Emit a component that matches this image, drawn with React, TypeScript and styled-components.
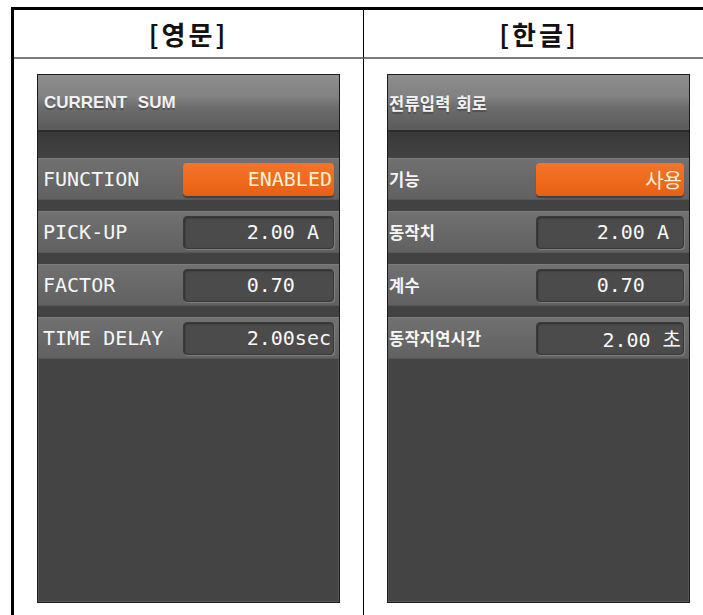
import React from "react";
import styled, { createGlobalStyle, css } from "styled-components";

const GlobalStyle = createGlobalStyle`
  html, body {
    margin: 0;
    padding: 0;
    background: #fff;
    overflow: hidden;
  }
`;

type Lang = "en" | "ko";

const MONO = `"DejaVu Sans Mono", "Noto Sans CJK KR", monospace`;
const HANGUL = `"Noto Sans CJK KR", "Noto Sans", sans-serif`;

/* ── Outer comparison table ───────────────────────── */
const Table = styled.div`
  margin: 7px 0 0 11px;
  border-top: 3px solid #000;
  border-left: 3px solid #000;
  display: grid;
  grid-template-columns: 350px 350px;
  grid-template-rows: 49px 1fr;
  width: 700px;
  height: 605px;
`;

const HeadCell = styled.div<{ $divider?: boolean }>`
  display: flex;
  align-items: center;
  justify-content: center;
  border-bottom: 2px solid #7d7d7d;
  ${({ $divider }) => $divider && css`border-right: 1px solid #000;`}
  font-family: ${HANGUL};
  font-size: 26px;
  font-weight: 700;
  letter-spacing: 3px;
  color: #111;
`;

const BodyCell = styled.div<{ $divider?: boolean }>`
  padding: 15px 0 0 23px;
  ${({ $divider }) => $divider && css`border-right: 1px solid #000;`}
`;

/* ── Relay screen panel ───────────────────────────── */
const Screen = styled.div`
  width: 303px;
  height: 529px;
  box-sizing: border-box;
  border: 1px solid #1c1c1c;
  background: #444;
  display: flex;
  flex-direction: column;
  box-shadow: inset 0 -6px 0 -5px #5a5a5a, inset 1px 0 0 #555, inset -1px 0 0 #555;
`;

const TitleBar = styled.div<{ $lang: Lang }>`
  height: 55px;
  flex-shrink: 0;
  display: flex;
  align-items: center;
  padding-left: ${({ $lang }) => ($lang === "en" ? 6 : 1)}px;
  background: linear-gradient(#8e8e8e 0%, #818181 40%, #6d6d6d 58%, #5b5b5b 100%);
  border-bottom: 2px solid #2c2c2c;
  color: #f2f2f2;
  ${({ $lang }) =>
    $lang === "en"
      ? css`
          font-family: "Liberation Sans", Arial, sans-serif;
          font-size: 17px;
          font-weight: 700;
          word-spacing: 6px;
        `
      : css`
          font-family: ${HANGUL};
          font-size: 16.5px;
          font-weight: 700;
          letter-spacing: 0.2px;
          word-spacing: 2px;
        `}
  text-shadow: 0 2px 1px rgba(0, 0, 0, 0.25);
`;

const RowList = styled.div`
  display: flex;
  flex-direction: column;
  gap: 11px;
  padding-top: 26px;
  background: linear-gradient(#393939, #424242 26px);
`;

const Row = styled.div<{ $lang: Lang }>`
  height: 42px;
  display: flex;
  align-items: center;
  padding: 0 5px 0 ${({ $lang }) => ($lang === "en" ? 5 : 1)}px;
  background: linear-gradient(#717171, #676767 60%, #616161);
  box-shadow: inset 0 1px 0 #7c7c7c, inset 0 -1px 0 #575757;
`;

const Label = styled.span<{ $lang: Lang }>`
  flex: 1;
  color: #f6f6f6;
  white-space: pre;
  ${({ $lang }) =>
    $lang === "en"
      ? css`
          font-family: ${MONO};
          font-size: 20px;
        `
      : css`
          font-family: ${HANGUL};
          font-size: 16.5px;
          font-weight: 700;
          letter-spacing: 0.2px;
        `}
`;

const Value = styled.span<{ $active?: boolean; $width: number }>`
  width: ${({ $width }) => $width}px;
  height: 33px;
  box-sizing: border-box;
  display: flex;
  align-items: center;
  justify-content: flex-end;
  padding-right: 2px;
  border-radius: 4px;
  font-family: ${MONO};
  font-size: 20px;
  white-space: pre;
  ${({ $active }) =>
    $active
      ? css`
          background: linear-gradient(#f47428, #ef6a1c 55%, #e75f14);
          color: #fff0d6;
          box-shadow: 0 2px 1px rgba(0, 0, 0, 0.35);
        `
      : css`
          background: #4b4b4b;
          color: #f8f8f8;
          border: 1px solid #3a3a3a;
          box-shadow: inset 1px 1px 2px #2e2e2e, 1px 1px 0 #7c7c7c;
        `}
`;

type Setting = { label: string; value: string; active?: boolean };

const panels: { lang: Lang; head: string; title: string; box: number; rows: Setting[] }[] = [
  {
    lang: "en",
    head: "[영문]",
    title: "CURRENT SUM",
    box: 151,
    rows: [
      { label: "FUNCTION", value: "ENABLED", active: true },
      { label: "PICK-UP", value: "2.00 A " },
      { label: "FACTOR", value: "0.70   " },
      { label: "TIME DELAY", value: "2.00sec" },
    ],
  },
  {
    lang: "ko",
    head: "[한글]",
    title: "전류입력 회로",
    box: 148,
    rows: [
      { label: "기능", value: "사용", active: true },
      { label: "동작치", value: "2.00 A " },
      { label: "계수", value: "0.70   " },
      { label: "동작지연시간", value: "2.00 초" },
    ],
  },
];

export default function App() {
  return (
    <>
      <GlobalStyle />
      <Table>
        {panels.map((p, i) => (
          <HeadCell key={p.head} $divider={i === 0}>
            {p.head}
          </HeadCell>
        ))}
        {panels.map((p, i) => (
          <BodyCell key={p.title} $divider={i === 0}>
            <Screen>
              <TitleBar $lang={p.lang}>{p.title}</TitleBar>
              <RowList>
                {p.rows.map((r) => (
                  <Row key={r.label} $lang={p.lang}>
                    <Label $lang={p.lang}>{r.label}</Label>
                    <Value $active={r.active} $width={p.box}>
                      {r.value}
                    </Value>
                  </Row>
                ))}
              </RowList>
            </Screen>
          </BodyCell>
        ))}
      </Table>
    </>
  );
}
